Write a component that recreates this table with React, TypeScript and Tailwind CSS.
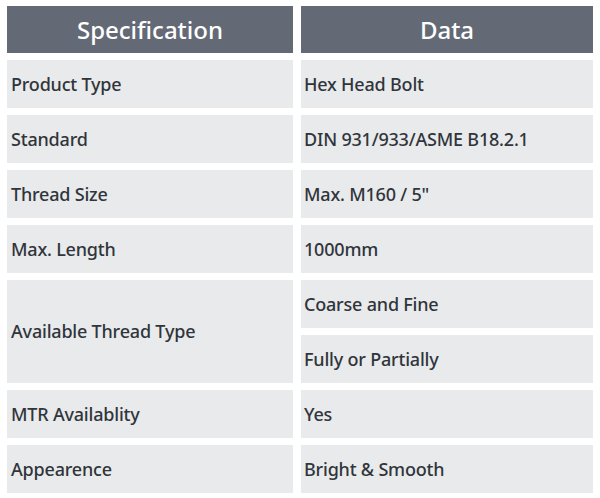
import { Fragment } from "react";

const rows: { spec: string; data: string[] }[] = [
  { spec: "Product Type", data: ["Hex Head Bolt"] },
  { spec: "Standard", data: ["DIN 931/933/ASME B18.2.1"] },
  { spec: "Thread Size", data: ['Max. M160 / 5"'] },
  { spec: "Max. Length", data: ["1000mm"] },
  { spec: "Available Thread Type", data: ["Coarse and Fine", "Fully or Partially"] },
  { spec: "MTR Availablity", data: ["Yes"] },
  { spec: "Appearence", data: ["Bright & Smooth"] },
];

export default function App() {
  return (
    <div className="w-[600px] h-[498px] bg-white pt-[6px] pl-[7px] font-['Noto_Sans',sans-serif]">
      <div className="grid grid-cols-[286px_292px] gap-x-[8px] gap-y-[7px]">
        {/* Header */}
        <div className="h-[47px] bg-[#636a76] text-white text-[24px] font-medium flex items-center justify-center">
          Specification
        </div>
        <div className="h-[47px] bg-[#636a76] text-white text-[24px] font-medium flex items-center justify-center">
          Data
        </div>

        {/* Body */}
        {rows.map((r) => (
          <Fragment key={r.spec}>
            <div
              className={`bg-[#e9eaec] text-[#30353b] text-[18px] tracking-[-0.2px] font-medium flex items-center pl-[4px] ${
                r.data.length > 1 ? "row-span-2" : "h-[48px]"
              }`}
            >
              {r.spec}
            </div>
            {r.data.map((d) => (
              <div
                key={d}
                className="h-[48px] bg-[#e9eaec] text-[#30353b] text-[18px] tracking-[-0.2px] font-medium flex items-center pl-[3px]"
              >
                {d}
              </div>
            ))}
          </Fragment>
        ))}
      </div>
    </div>
  );
}
